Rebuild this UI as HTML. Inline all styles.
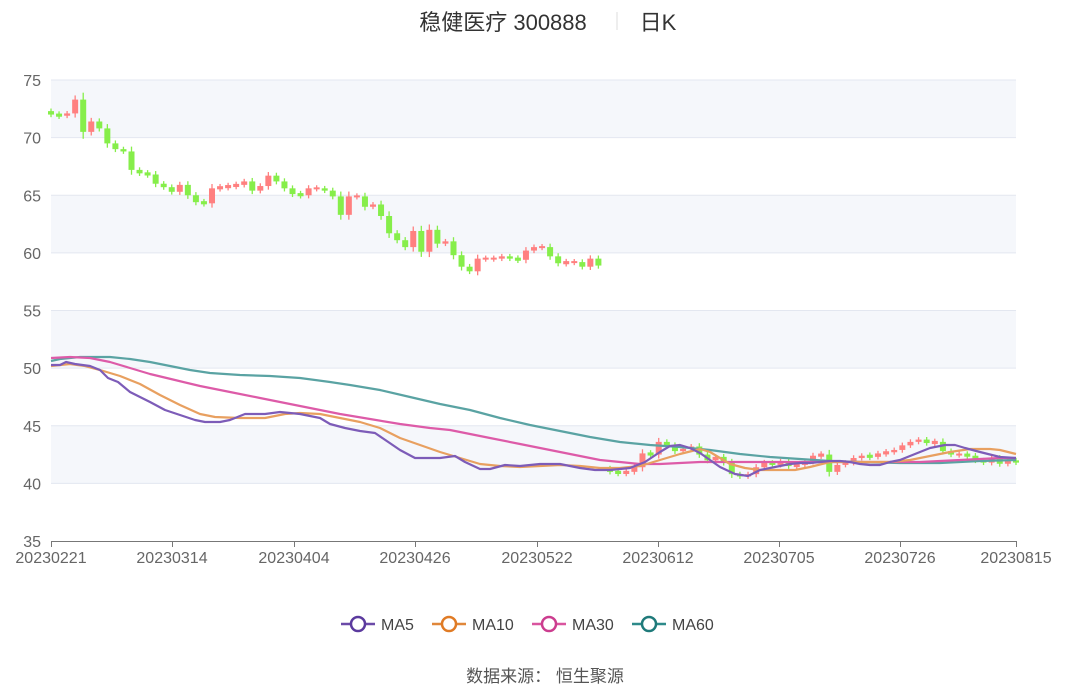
<!DOCTYPE html>
<html><head><meta charset="utf-8">
<style>
html,body{margin:0;padding:0;background:#fff;width:1090px;height:689px;overflow:hidden}
body{font-family:"Liberation Sans","Noto Sans CJK SC",sans-serif}
svg text{font-family:"Liberation Sans","Noto Sans CJK SC",sans-serif}
</style></head><body>
<svg id="s" width="1090" height="689" xmlns="http://www.w3.org/2000/svg">
<text x="503" y="30" font-size="22" fill="#333" text-anchor="middle">稳健医疗 300888</text>
<line x1="617" y1="12" x2="617" y2="30" stroke="#ddd" stroke-width="1"/>
<text x="658" y="30" font-size="22" fill="#333" text-anchor="middle">日K</text>
<g id="grid"></g>
<g id="cand"></g>
<g id="ma"></g>
<g id="axis"></g>
<g font-size="16" fill="#444">
<line x1="341" y1="624" x2="375" y2="624" stroke="#6b4aa8" stroke-width="2.5"/><circle cx="358" cy="624" r="7" fill="#fff" stroke="#5b3a9e" stroke-width="2.5"/><text x="381" y="630">MA5</text>
<line x1="432" y1="624" x2="466" y2="624" stroke="#e0873a" stroke-width="2.5"/><circle cx="449" cy="624" r="7" fill="#fff" stroke="#e07b25" stroke-width="2.5"/><text x="472" y="630">MA10</text>
<line x1="532" y1="624" x2="566" y2="624" stroke="#d9559f" stroke-width="2.5"/><circle cx="549" cy="624" r="7" fill="#fff" stroke="#cc3d8f" stroke-width="2.5"/><text x="572" y="630">MA30</text>
<line x1="632" y1="624" x2="666" y2="624" stroke="#2d8a8a" stroke-width="2.5"/><circle cx="649" cy="624" r="7" fill="#fff" stroke="#1f7a7a" stroke-width="2.5"/><text x="672" y="630">MA60</text>
</g>
<text x="545" y="682" font-size="17" fill="#555" text-anchor="middle">数据来源： 恒生聚源</text>
</svg>
<script>
var NS="http://www.w3.org/2000/svg";
function el(g,t,a,txt){var e=document.createElementNS(NS,t);for(var k in a)e.setAttribute(k,a[k]);if(txt!=null)e.textContent=txt;document.getElementById(g).appendChild(e);return e;}
function Y(v){return 80+(75-v)*11.525;}
var L=51,R=1016;
[[75,70],[65,60],[55,50],[45,40]].forEach(function(b){el("grid","rect",{x:L,y:Y(b[0]),width:R-L,height:Y(b[1])-Y(b[0]),fill:"#f5f7fb"});});
for(var v=75;v>=40;v-=5){el("grid","line",{x1:L,x2:R,y1:Y(v),y2:Y(v),stroke:"#e3e7f0","stroke-width":1});}
for(var v=75;v>=35;v-=5){el("axis","text",{x:41,y:Y(v)+6,"font-size":16,fill:"#666","text-anchor":"end"},v);}
el("axis","line",{x1:L,x2:R,y1:541.5,y2:541.5,stroke:"#777","stroke-width":1});
var ticks=[[51,"20230221"],[172,"20230314"],[294,"20230404"],[415,"20230426"],[537,"20230522"],[658,"20230612"],[779,"20230705"],[900,"20230726"],[1016,"20230815"]];
ticks.forEach(function(t){el("axis","line",{x1:t[0]+.5,x2:t[0]+.5,y1:541,y2:547,stroke:"#777"});el("axis","text",{x:t[0],y:563,"font-size":16,fill:"#666","text-anchor":"middle"},t[1]);});
function candles(x0,dx,arr,start){var prev=start;arr.forEach(function(c,i){var x=x0+i*dx;var up=c>=prev;var col=up?"#ff8080":"#86ee4a";var t=Y(Math.max(c,prev)),b=Y(Math.min(c,prev));if(b-t<2){t-=1;b+=1;}var w=(Math.abs(c-prev)*0.25+0.3)*11.525;el("cand","line",{x1:x,x2:x,y1:t-w*0.6,y2:b+w*0.6,stroke:col,"stroke-width":1.3});el("cand","rect",{x:x-3,y:t,width:6,height:b-t,fill:col});prev=c;});}
candles(51,8.05,[72.0,71.9,72.1,73.3,70.5,71.4,70.8,69.5,69.0,68.8,67.2,66.9,66.8,66.0,65.7,65.3,65.9,65.0,64.4,64.3,65.6,65.7,65.8,65.9,66.2,65.4,65.8,66.7,66.2,65.6,65.1,65.0,65.6,65.6,65.4,64.9,63.3,64.9,64.9,64.0,64.2,63.2,61.7,61.1,60.5,61.9,60.1,62.0,60.8,61.0,59.8,58.8,58.4,59.5,59.5,59.5,59.7,59.5,59.4,60.2,60.5,60.5,59.7,59.1,59.2,59.2,58.8,59.5,58.9],72.3);
candles(610,8.12,[41.0,40.9,41.0,41.4,42.6,42.5,43.6,43.3,42.8,43.0,43.2,42.5,42.0,42.3,41.8,40.8,40.6,40.8,41.4,41.8,41.6,41.9,41.5,41.6,41.9,42.4,42.5,41.0,41.6,41.8,42.2,42.4,42.3,42.6,42.7,42.9,43.3,43.6,43.8,43.5,43.6,42.8,42.5,42.5,42.4,42.0,41.8,42.2,41.7,42.0,41.8],41.3);
function line(pts,col){el("ma","polyline",{points:pts.map(function(p){return p.join(",")}).join(" "),fill:"none",stroke:col,"stroke-width":2.2,"stroke-linejoin":"round"});}
line([[51,361],[60,359],[80,357],[110,357],[130,359],[150,362],[170,366],[190,370],[210,373],[240,375],[270,376],[300,378],[330,382],[350,385],[380,390],[410,397],[440,404],[470,410],[500,418],[530,425],[560,431],[590,437],[620,442],[650,445],[680,447],[710,450],[740,454],[770,457],[800,459],[830,461],[860,462],[900,463],[940,463],[980,461],[1016,460]],"#5aa3a3");
line([[51,358],[70,357],[90,358],[110,362],[130,368],[150,374],[175,380],[200,386],[230,392],[260,398],[290,404],[320,410],[340,414],[370,419],[400,424],[430,428],[450,430],[470,434],[490,438],[520,444],[550,450],[580,456],[600,460],[620,462],[640,464],[660,464],[680,463],[700,462],[720,462],[760,462],[800,462],[840,462],[880,462],[920,462],[960,460],[1000,458],[1016,458]],"#dd5ba8");
line([[51,366],[70,364],[85,366],[100,370],[120,376],[140,384],[160,395],[180,405],[200,414],[215,417],[240,418],[265,418],[285,414],[300,413],[320,414],[340,418],[360,422],[380,428],[400,438],[420,445],[440,452],[460,458],[480,464],[500,466],[520,467],[540,466],[560,465],[580,466],[600,468],[620,468],[640,466],[660,460],[680,454],[700,449],[710,452],[720,458],[730,464],[745,468],[760,470],[780,470],[795,470],[810,467],[830,462],[850,462],[870,462],[890,462],[910,460],[930,456],[950,452],[970,449],[990,449],[1000,450],[1016,454]],"#e8a060");
line([[51,365],[60,365],[66,362],[75,364],[90,366],[100,370],[108,378],[118,382],[130,392],[150,402],[165,410],[180,415],[195,420],[205,422],[220,422],[230,420],[245,414],[265,414],[280,412],[300,414],[320,418],[330,424],[345,428],[360,431],[375,433],[400,450],[415,458],[440,458],[455,456],[465,462],[480,469],[490,469],[505,465],[520,466],[540,464],[560,464],[580,468],[595,470],[610,470],[630,468],[645,462],[660,452],[670,446],[680,445],[690,448],[700,453],[710,460],[720,467],[735,474],[748,476],[760,470],[775,467],[790,464],[800,463],[810,463],[820,462],[830,461],[840,461],[850,462],[860,464],[870,465],[880,465],[890,462],[900,460],[910,456],[920,452],[930,448],[945,445],[955,445],[965,448],[980,452],[1000,457],[1016,458]],"#7d5cb8");
</script>
</body></html>
